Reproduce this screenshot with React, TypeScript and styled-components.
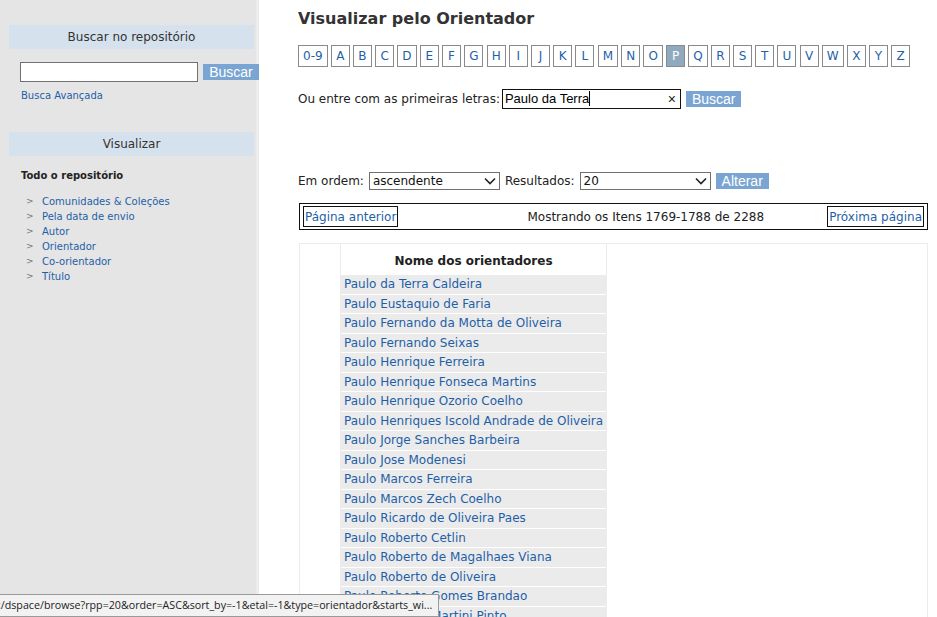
import styled, { createGlobalStyle } from "styled-components";

const GlobalStyle = createGlobalStyle`
  html, body {
    margin: 0;
    padding: 0;
    background: #ffffff;
  }
  body {
    font-family: "DejaVu Sans", Verdana, sans-serif;
    color: #222;
    overflow: hidden;
  }
`;

const Page = styled.div`
  display: flex;
  height: 617px;
  width: 937px;
  overflow: hidden;
`;

const Sidebar = styled.aside`
  width: 259px;
  flex: none;
  background: #e5e5e5;
  border-right: 3px solid #ececec;
  padding: 25px 0 0 9px;
  box-sizing: border-box;
`;

const SideHeading = styled.div`
  width: 245px;
  height: 24px;
  line-height: 25px;
  background: #d5e2ee;
  text-align: center;
  font-size: 12px;
  color: #333;
`;

const SearchRow = styled.div`
  display: flex;
  align-items: center;
  gap: 5px;
  margin: 13px 0 0 11px;
  & > * {
    flex: none;
  }
`;

const SideInput = styled.div`
  width: 176px;
  height: 18px;
  border: 1px solid #707070;
  background: #fff;
`;

const BlueButton = styled.span<{ $w?: number }>`
  display: inline-block;
  background: #7aa5d2;
  color: #fff;
  font-family: "Liberation Sans", Arial, sans-serif;
  font-size: 14px;
  line-height: 16px;
  height: 16px;
  padding: 0 6px;
  text-align: center;
  width: ${(p) => (p.$w ? `${p.$w}px` : "auto")};
  box-sizing: content-box;
`;

const SmallLink = styled.a`
  display: block;
  color: #1f5fa8;
  font-size: 10px;
  text-decoration: none;
  margin: 8px 0 0 12px;
`;

const SideBlock = styled.div<{ $top: number }>`
  margin-top: ${(p) => p.$top}px;
`;

const SideTitle = styled.div`
  font-size: 10px;
  font-weight: bold;
  color: #222;
  margin: 14px 0 0 12px;
`;

const NavList = styled.ul`
  list-style: none;
  margin: 13px 0 0 0;
  padding: 0 0 0 17px;
`;

const NavItem = styled.li`
  display: flex;
  font-size: 10px;
  line-height: 15px;
  &::before {
    content: ">";
    color: #777;
    width: 16px;
    font-size: 9px;
  }
  a {
    color: #1f5fa8;
    text-decoration: none;
  }
`;

const Main = styled.main`
  flex: 1;
  padding: 7px 9px 0 39px;
  box-sizing: border-box;
`;

const Title = styled.h1`
  margin: 0;
  font-size: 16px;
  font-weight: bold;
  color: #333;
  line-height: 23px;
`;

const Letters = styled.div`
  display: flex;
  gap: 3.2px;
  margin-top: 15px;
`;

const Letter = styled.a<{ $active?: boolean }>`
  display: inline-block;
  height: 20px;
  line-height: 20px;
  padding: 0 4px;
  min-width: 9px;
  text-align: center;
  font-size: 12px;
  white-space: nowrap;
  border: 1px solid #8a8a8a;
  color: ${(p) => (p.$active ? "#fff" : "#1f5fa8")};
  background: ${(p) => (p.$active ? "#8fa9bf" : "#fff")};
  text-decoration: none;
`;

const FormRow = styled.div<{ $top: number }>`
  display: flex;
  align-items: center;
  margin-top: ${(p) => p.$top}px;
  font-size: 12px;
  color: #222;
`;

const TextBox = styled.div`
  position: relative;
  width: 175px;
  height: 18px;
  border: 1px solid #111;
  margin-left: 2px;
  margin-right: 5px;
  padding-left: 2px;
  line-height: 18px;
  font-family: "Liberation Sans", Arial, sans-serif;
  font-size: 13px;
  color: #000;
`;

const Caret = styled.span`
  display: inline-block;
  width: 1px;
  height: 15px;
  background: #000;
  vertical-align: -3px;
`;

const ClearMark = styled.span`
  position: absolute;
  right: 4px;
  top: 0;
  font-size: 14px;
  color: #222;
`;

const Select = styled.div<{ $w: number }>`
  display: flex;
  align-items: center;
  justify-content: space-between;
  width: ${(p) => p.$w}px;
  height: 16px;
  border: 1px solid #707070;
  padding: 0 3px 0 3px;
  margin: 0 5px 0 5px;
  font-size: 12px;
  color: #111;
  box-sizing: content-box;
`;

const Pager = styled.div`
  display: flex;
  align-items: center;
  justify-content: space-between;
  margin: 13px 0 0 1px;
  height: 25px;
  border: 1px solid #111;
  padding: 0 3px;
  font-size: 12px;
  color: #222;
`;

const PagerInfo = styled.span`
  margin-left: 66px;
`;

const PagerLink = styled.a`
  border: 1px solid #111;
  padding: 1px 1px 0;
  height: 18px;
  line-height: 18px;
  color: #1f5fa8;
  text-decoration: none;
`;

const Results = styled.div`
  display: flex;
  margin: 13px 0 0 1px;
  border: 1px solid #ececec;
  height: 400px;
`;

const EmptyCell = styled.div<{ $w?: number }>`
  width: ${(p) => (p.$w ? `${p.$w}px` : "auto")};
  flex: ${(p) => (p.$w ? "none" : "1")};
  border-right: 1px solid #ececec;
  &:last-child {
    border-right: none;
  }
`;

const NameColumn = styled.div`
  width: 265px;
  flex: none;
  border-right: 1px solid #ececec;
  display: flex;
  flex-direction: column;
  gap: 1px;
`;

const ColumnHead = styled.div`
  height: 30px;
  line-height: 34px;
  text-align: center;
  font-weight: bold;
  font-size: 12px;
  color: #222;
`;

const NameRow = styled.a`
  display: block;
  height: 18.5px;
  line-height: 19px;
  background: #ebebeb;
  padding-left: 3px;
  font-size: 12px;
  color: #1f5fa8;
  text-decoration: none;
  white-space: nowrap;
`;

const StatusBar = styled.div`
  position: fixed;
  left: 0;
  bottom: 0;
  width: 438px;
  height: 21px;
  line-height: 20px;
  background: #f2f2f2;
  border: 1px solid #9a9a9a;
  border-left: none;
  font-family: "Open Sans", "Noto Sans", sans-serif;
  font-size: 10.7px;
  color: #222;
  white-space: nowrap;
  overflow: hidden;
  span {
    margin-left: -2px;
  }
`;

const Chevron = () => (
  <svg width="12" height="8" viewBox="0 0 12 8">
    <path d="M1 1.5 L6 6.5 L11 1.5" fill="none" stroke="#222" strokeWidth="1.6" />
  </svg>
);

const letters = ["0-9", ..."ABCDEFGHIJKLMNOPQRSTUVWXYZ".split("")];

const names = [
  "Paulo da Terra Caldeira",
  "Paulo Eustaquio de Faria",
  "Paulo Fernando da Motta de Oliveira",
  "Paulo Fernando Seixas",
  "Paulo Henrique Ferreira",
  "Paulo Henrique Fonseca Martins",
  "Paulo Henrique Ozorio Coelho",
  "Paulo Henriques Iscold Andrade de Oliveira",
  "Paulo Jorge Sanches Barbeira",
  "Paulo Jose Modenesi",
  "Paulo Marcos Ferreira",
  "Paulo Marcos Zech Coelho",
  "Paulo Ricardo de Oliveira Paes",
  "Paulo Roberto Cetlin",
  "Paulo Roberto de Magalhaes Viana",
  "Paulo Roberto de Oliveira",
  "Paulo Roberto Gomes Brandao",
  "Paulo Roberto Martini Pinto",
];

const navItems = [
  "Comunidades & Coleções",
  "Pela data de envio",
  "Autor",
  "Orientador",
  "Co-orientador",
  "Título",
];

export default function App() {
  return (
    <Page>
      <GlobalStyle />
      <Sidebar>
        <SideHeading>Buscar no repositório</SideHeading>
        <SearchRow>
          <SideInput />
          <BlueButton $w={44}>Buscar</BlueButton>
        </SearchRow>
        <SmallLink href="#">Busca Avançada</SmallLink>
        <SideBlock $top={31}>
          <SideHeading>Visualizar</SideHeading>
          <SideTitle>Todo o repositório</SideTitle>
          <NavList>
            {navItems.map((item) => (
              <NavItem key={item}>
                <a href="#">{item}</a>
              </NavItem>
            ))}
          </NavList>
        </SideBlock>
      </Sidebar>
      <Main>
        <Title>Visualizar pelo Orientador</Title>
        <Letters>
          {letters.map((l) => (
            <Letter key={l} href="#" $active={l === "P"}>
              {l}
            </Letter>
          ))}
        </Letters>
        <FormRow $top={22}>
          Ou entre com as primeiras letras:
          <TextBox>
            Paulo da Terra
            <Caret />
            <ClearMark>×</ClearMark>
          </TextBox>
          <BlueButton $w={43}>Buscar</BlueButton>
        </FormRow>
        <FormRow $top={63}>
          Em ordem:
          <Select $w={123}>
            ascendente
            <Chevron />
          </Select>
          Resultados:
          <Select $w={123}>
            20
            <Chevron />
          </Select>
          <BlueButton $w={41}>Alterar</BlueButton>
        </FormRow>
        <Pager>
          <PagerLink href="#">Página anterior</PagerLink>
          <PagerInfo>Mostrando os Itens 1769-1788 de 2288</PagerInfo>
          <PagerLink href="#">Próxima página</PagerLink>
        </Pager>
        <Results>
          <EmptyCell $w={40} />
          <NameColumn>
            <ColumnHead>Nome dos orientadores</ColumnHead>
            {names.map((n) => (
              <NameRow key={n} href="#">
                {n}
              </NameRow>
            ))}
          </NameColumn>
          <EmptyCell />
        </Results>
      </Main>
      <StatusBar>
        <span>:/dspace/browse?rpp=20&amp;order=ASC&amp;sort_by=-1&amp;etal=-1&amp;type=orientador&amp;starts_wi...</span>
      </StatusBar>
    </Page>
  );
}
